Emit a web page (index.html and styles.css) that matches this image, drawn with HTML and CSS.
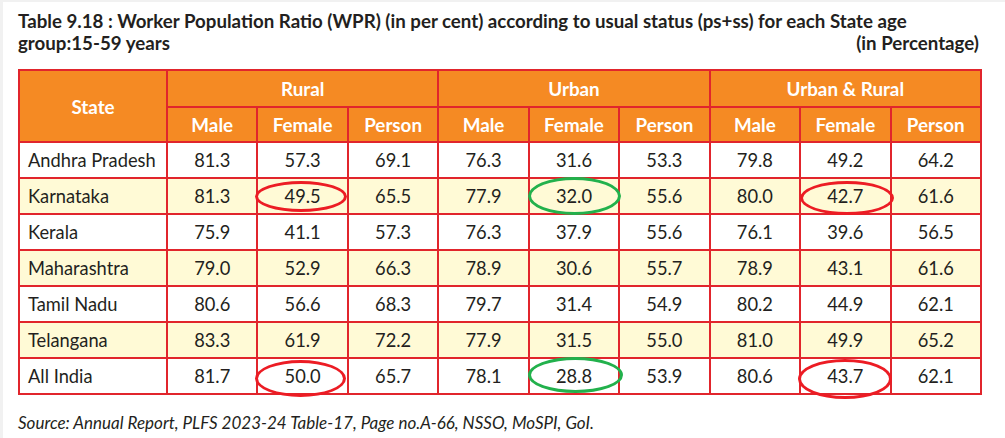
FILE: index.html
```html
<!DOCTYPE html>
<html>
<head>
<meta charset="utf-8">
<link rel="stylesheet" href="styles.css">
</head>
<body>
<div class="page">
  <div class="title">
    <div class="title-line">Table 9.18 : Worker Population Ratio (WPR) (in per cent) according to usual status (ps+ss) for each State age</div>
    <div class="title-line split"><span>group:15-59 years</span><span>(in Percentage)</span></div>
  </div>
  <table class="wpr">
    <colgroup>
      <col class="c-state">
      <col><col><col><col><col><col><col><col><col>
    </colgroup>
    <thead>
      <tr class="h1">
        <th rowspan="2">State</th>
        <th colspan="3">Rural</th>
        <th colspan="3">Urban</th>
        <th colspan="3">Urban &amp; Rural</th>
      </tr>
      <tr class="h2">
        <th>Male</th><th>Female</th><th>Person</th>
        <th>Male</th><th>Female</th><th>Person</th>
        <th>Male</th><th>Female</th><th>Person</th>
      </tr>
    </thead>
    <tbody>
      <tr><td>Andhra Pradesh</td><td>81.3</td><td>57.3</td><td>69.1</td><td>76.3</td><td>31.6</td><td>53.3</td><td>79.8</td><td>49.2</td><td>64.2</td></tr>
      <tr class="alt"><td>Karnataka</td><td>81.3</td><td class="mark"><span class="ring red r1"></span>49.5</td><td>65.5</td><td>77.9</td><td class="mark"><span class="ring green r2"></span>32.0</td><td>55.6</td><td>80.0</td><td class="mark"><span class="ring red r3"></span>42.7</td><td>61.6</td></tr>
      <tr><td>Kerala</td><td>75.9</td><td>41.1</td><td>57.3</td><td>76.3</td><td>37.9</td><td>55.6</td><td>76.1</td><td>39.6</td><td>56.5</td></tr>
      <tr class="alt"><td>Maharashtra</td><td>79.0</td><td>52.9</td><td>66.3</td><td>78.9</td><td>30.6</td><td>55.7</td><td>78.9</td><td>43.1</td><td>61.6</td></tr>
      <tr><td>Tamil Nadu</td><td>80.6</td><td>56.6</td><td>68.3</td><td>79.7</td><td>31.4</td><td>54.9</td><td>80.2</td><td>44.9</td><td>62.1</td></tr>
      <tr class="alt"><td>Telangana</td><td>83.3</td><td>61.9</td><td>72.2</td><td>77.9</td><td>31.5</td><td>55.0</td><td>81.0</td><td>49.9</td><td>65.2</td></tr>
      <tr><td>All India</td><td>81.7</td><td class="mark"><span class="ring red r4"></span>50.0</td><td>65.7</td><td>78.1</td><td class="mark"><span class="ring green r5"></span>28.8</td><td>53.9</td><td>80.6</td><td class="mark"><span class="ring red r6"></span>43.7</td><td>62.1</td></tr>
    </tbody>
  </table>
  <p class="source">Source: Annual Report, PLFS 2023-24 Table-17, Page no.A-66, NSSO, MoSPI, GoI.</p>
</div>
</body>
</html>
```

FILE: styles.css
```css
html, body {
  margin: 0;
  padding: 0;
  background: #f1f1f1;
}
.page {
  margin: 2px 0 0 3px;
  background: #ffffff;
  height: 436px;
  padding: 0 0 0 15px;
  box-sizing: border-box;
  font-family: Lato, "Open Sans", sans-serif;
  color: #231f20;
  overflow: hidden;
}
.title {
  width: 961px;
  padding-top: 8px;
  font-weight: 700;
  font-size: 18.7px;
  line-height: 22px;
  color: #231f20;
}
.split {
  display: flex;
  justify-content: space-between;
}
.wpr {
  margin-top: 15px;
  border-collapse: collapse;
  table-layout: fixed;
  width: 964px;
  font-size: 18.3px;
}
.c-state { width: 148px; }
.wpr th, .wpr td {
  border: 2px solid #e1252c;
  padding: 0;
  text-align: center;
}
.wpr th {
  background: #f58a23;
  color: #ffffff;
  font-weight: 700;
  font-size: 18.8px;
}
.h1 { height: 37px; }
.h2 { height: 35px; }
.wpr tbody tr { height: 36px; }
.wpr tbody tr.alt td { background: #fffad6; }
.wpr td:first-child {
  text-align: left;
  padding-left: 8px;
}
.mark { position: relative; }
.ring {
  position: absolute;
  border: 3px solid;
  border-radius: 50%;
  box-sizing: border-box;
  z-index: 2;
}
.ring.red { border-color: #ec1c24; }
.ring.green { border-color: #22b14c; }
.r1 { left: -3px; top: 2px; width: 92px; height: 31px; }
.r2 { left: -2px; top: -2px; width: 93px; height: 38px; }
.r3 { left: -1px; top: 2px; width: 94px; height: 34px; }
.r4 { left: -3px; top: 1px; width: 91px; height: 37px; }
.r5 { left: -2px; top: -2px; width: 95px; height: 36px; }
.r6 { left: -3px; top: 0px; width: 94px; height: 40px; }
.source {
  margin: 18px 0 0 0;
  font-style: italic;
  font-size: 17px;
  line-height: 20px;
}
```
